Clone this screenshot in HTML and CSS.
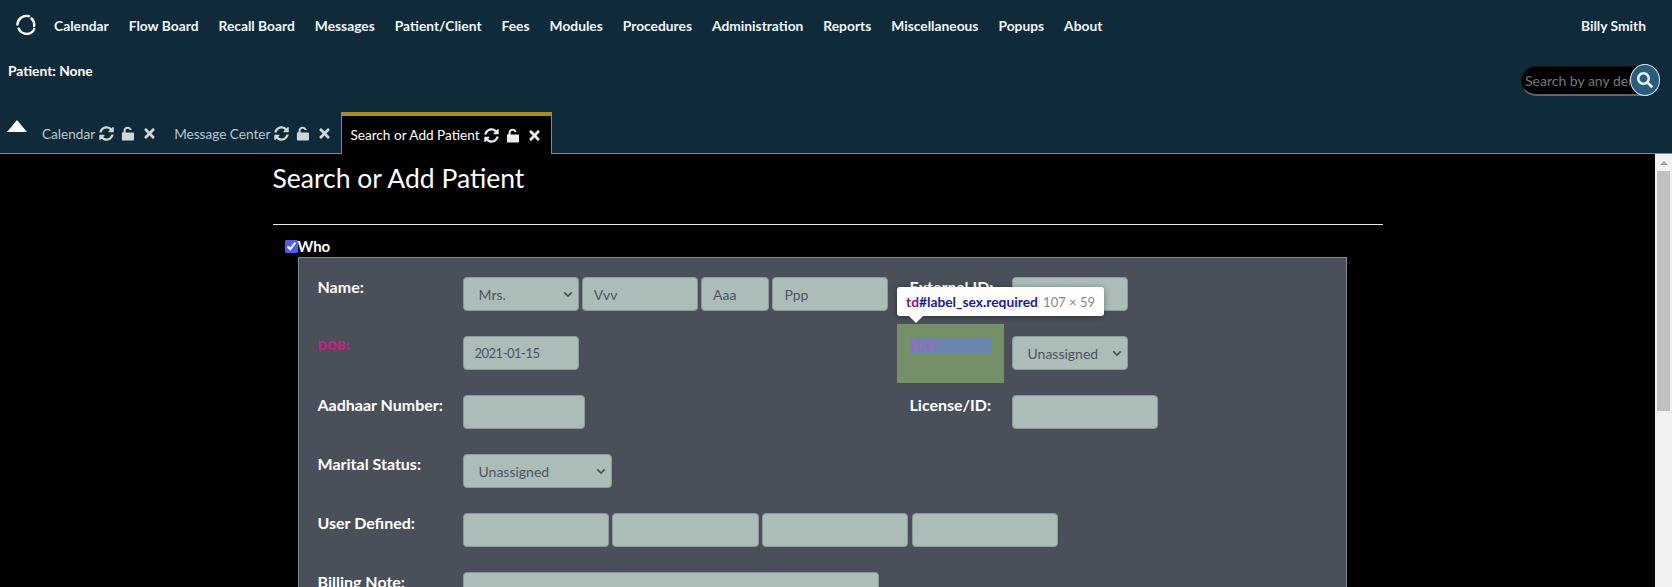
FILE: index.html
```html
<!DOCTYPE html>
<html lang="en">
<head>
    <title>Search or Add Patient</title>
    <meta charset="utf-8">
    <link rel="stylesheet" href="styles.css">
</head>
<body>
    <header id="topbar">
        <nav class="mainnav">
            <svg class="logo" viewBox="0 0 24 24" width="24" height="24">
                <path d="M15 3.2C9 1.6 3.5 6 3.4 11.6" />
                <path d="M17.5 5.5c2.6 2.4 3 5 2.6 7.6" />
                <path d="M4.6 15.5c1.6 3.8 5.6 5.8 9.6 5.2 3-.5 5-2.2 6-4.6" />
            </svg>
            <a>Calendar</a>
            <a>Flow Board</a>
            <a>Recall Board</a>
            <a>Messages</a>
            <a>Patient/Client</a>
            <a>Fees</a>
            <a>Modules</a>
            <a>Procedures</a>
            <a>Administration</a>
            <a>Reports</a>
            <a>Miscellaneous</a>
            <a>Popups</a>
            <a>About</a>
            <a class="username">Billy Smith</a>
        </nav>
        <div class="patientbar">
            <span class="patientname">Patient: None</span>
            <div class="searchbox">
                <input type="text" placeholder="Search by any demographics">
                <button type="button">
                    <svg viewBox="0 0 512 512" width="16" height="16"><path d="M505 442.7L405.3 343c-4.5-4.5-10.6-7-17-7H372c27.6-35.3 44-79.7 44-128C416 93.1 322.9 0 208 0S0 93.1 0 208s93.1 208 208 208c48.3 0 92.7-16.4 128-44v16.3c0 6.4 2.5 12.5 7 17l99.7 99.7c9.4 9.4 24.6 9.4 33.9 0l28.3-28.3c9.4-9.4 9.4-24.6.1-34zM208 336c-70.7 0-128-57.2-128-128 0-70.7 57.2-128 128-128 70.7 0 128 57.2 128 128 0 70.7-57.2 128-128 128z"/></svg>
                </button>
            </div>
        </div>
        <div class="tabbar">
            <span class="caret"></span>
            <div class="tab">
                <span>Calendar</span>
                <svg class="ic-sync" viewBox="0 0 512 512"><path d="M370.72 133.28C339.458 104.008 298.888 87.962 255.848 88c-77.458.068-144.328 53.178-162.791 126.85-1.344 5.363-6.122 9.15-11.651 9.15H24.103c-7.498 0-13.194-6.807-11.807-14.176C33.933 94.924 134.813 8 256 8c66.448 0 126.791 26.136 171.315 68.685L463.03 40.97C478.149 25.851 504 36.559 504 57.941V192c0 13.255-10.745 24-24 24H345.941c-21.382 0-32.09-25.851-16.971-40.971l41.75-41.749zM32 296h134.059c21.382 0 32.09 25.851 16.971 40.971l-41.75 41.75c31.262 29.273 71.835 45.319 114.876 45.28 77.418-.07 144.315-53.144 162.787-126.849 1.344-5.363 6.122-9.15 11.651-9.15h57.304c7.498 0 13.194 6.807 11.807 14.176C478.067 417.076 377.187 504 256 504c-66.448 0-126.791-26.136-171.315-68.685L48.97 471.03C33.851 486.149 8 475.441 8 454.059V320c0-13.255 10.745-24 24-24z"/></svg>
                <svg class="ic-lock" viewBox="0 0 14 16"><path d="M1.500 7V6h.9V4.600C2.400 2.300 4.200.8 6.600.8c2.300 0 4 1.400 4.200 3.500H8.700C8.500 3.400 7.700 2.800 6.600 2.800 5.400 2.800 4.500 3.500 4.500 4.700V7h7.900c.6 0 1 .4 1 1v6.400c0 .6-.4 1-1 1H1.500c-.6 0-1-.4-1-1V8c0-.6.4-1 1-1z"/></svg>
                <svg class="ic-close" viewBox="0 0 352 512"><path d="M242.72 256l100.07-100.07c12.28-12.28 12.28-32.19 0-44.48l-22.24-22.24c-12.28-12.28-32.19-12.28-44.48 0L176 189.28 75.93 89.21c-12.28-12.28-32.19-12.28-44.48 0L9.21 111.45c-12.28 12.28-12.28 32.19 0 44.48L109.28 256 9.21 356.07c-12.28 12.28-12.28 32.19 0 44.48l22.24 22.24c12.28 12.28 32.2 12.28 44.48 0L176 322.72l100.07 100.07c12.28 12.28 32.2 12.28 44.48 0l22.24-22.24c12.28-12.28 12.28-32.19 0-44.48L242.72 256z"/></svg>
            </div>
            <div class="tab">
                <span>Message Center</span>
                <svg class="ic-sync" viewBox="0 0 512 512"><path d="M370.72 133.28C339.458 104.008 298.888 87.962 255.848 88c-77.458.068-144.328 53.178-162.791 126.85-1.344 5.363-6.122 9.15-11.651 9.15H24.103c-7.498 0-13.194-6.807-11.807-14.176C33.933 94.924 134.813 8 256 8c66.448 0 126.791 26.136 171.315 68.685L463.03 40.97C478.149 25.851 504 36.559 504 57.941V192c0 13.255-10.745 24-24 24H345.941c-21.382 0-32.09-25.851-16.971-40.971l41.75-41.749zM32 296h134.059c21.382 0 32.09 25.851 16.971 40.971l-41.75 41.75c31.262 29.273 71.835 45.319 114.876 45.28 77.418-.07 144.315-53.144 162.787-126.849 1.344-5.363 6.122-9.15 11.651-9.15h57.304c7.498 0 13.194 6.807 11.807 14.176C478.067 417.076 377.187 504 256 504c-66.448 0-126.791-26.136-171.315-68.685L48.97 471.03C33.851 486.149 8 475.441 8 454.059V320c0-13.255 10.745-24 24-24z"/></svg>
                <svg class="ic-lock" viewBox="0 0 14 16"><path d="M1.500 7V6h.9V4.600C2.400 2.300 4.200.8 6.600.8c2.300 0 4 1.400 4.200 3.500H8.700C8.500 3.400 7.700 2.800 6.600 2.800 5.400 2.800 4.500 3.500 4.500 4.700V7h7.900c.6 0 1 .4 1 1v6.400c0 .6-.4 1-1 1H1.500c-.6 0-1-.4-1-1V8c0-.6.4-1 1-1z"/></svg>
                <svg class="ic-close" viewBox="0 0 352 512"><path d="M242.72 256l100.07-100.07c12.28-12.28 12.28-32.19 0-44.48l-22.24-22.24c-12.28-12.28-32.19-12.28-44.48 0L176 189.28 75.93 89.21c-12.28-12.28-32.19-12.28-44.48 0L9.21 111.45c-12.28 12.28-12.28 32.19 0 44.48L109.28 256 9.21 356.07c-12.28 12.28-12.28 32.19 0 44.48l22.24 22.24c12.28 12.28 32.2 12.28 44.48 0L176 322.72l100.07 100.07c12.28 12.28 32.2 12.28 44.48 0l22.24-22.24c12.28-12.28 12.28-32.19 0-44.48L242.72 256z"/></svg>
            </div>
            <div class="tab active">
                <span>Search or Add Patient</span>
                <svg class="ic-sync" viewBox="0 0 512 512"><path d="M370.72 133.28C339.458 104.008 298.888 87.962 255.848 88c-77.458.068-144.328 53.178-162.791 126.85-1.344 5.363-6.122 9.15-11.651 9.15H24.103c-7.498 0-13.194-6.807-11.807-14.176C33.933 94.924 134.813 8 256 8c66.448 0 126.791 26.136 171.315 68.685L463.03 40.97C478.149 25.851 504 36.559 504 57.941V192c0 13.255-10.745 24-24 24H345.941c-21.382 0-32.09-25.851-16.971-40.971l41.75-41.749zM32 296h134.059c21.382 0 32.09 25.851 16.971 40.971l-41.75 41.75c31.262 29.273 71.835 45.319 114.876 45.28 77.418-.07 144.315-53.144 162.787-126.849 1.344-5.363 6.122-9.15 11.651-9.15h57.304c7.498 0 13.194 6.807 11.807 14.176C478.067 417.076 377.187 504 256 504c-66.448 0-126.791-26.136-171.315-68.685L48.97 471.03C33.851 486.149 8 475.441 8 454.059V320c0-13.255 10.745-24 24-24z"/></svg>
                <svg class="ic-lock" viewBox="0 0 14 16"><path d="M1.500 7V6h.9V4.600C2.400 2.300 4.200.8 6.600.8c2.300 0 4 1.400 4.200 3.500H8.700C8.500 3.400 7.700 2.800 6.600 2.800 5.400 2.800 4.500 3.500 4.500 4.700V7h7.900c.6 0 1 .4 1 1v6.400c0 .6-.4 1-1 1H1.500c-.6 0-1-.4-1-1V8c0-.6.4-1 1-1z"/></svg>
                <svg class="ic-close" viewBox="0 0 352 512"><path d="M242.72 256l100.07-100.07c12.28-12.28 12.28-32.19 0-44.48l-22.24-22.24c-12.28-12.28-32.19-12.28-44.48 0L176 189.28 75.93 89.21c-12.28-12.28-32.19-12.28-44.48 0L9.21 111.45c-12.28 12.28-12.28 32.19 0 44.48L109.28 256 9.21 356.07c-12.28 12.28-12.28 32.19 0 44.48l22.24 22.24c12.28 12.28 32.2 12.28 44.48 0L176 322.72l100.07 100.07c12.28 12.28 32.2 12.28 44.48 0l22.24-22.24c12.28-12.28 12.28-32.19 0-44.48L242.72 256z"/></svg>
            </div>
        </div>
    </header>

    <section id="mainwrapper">
        <main class="content">
            <div class="container">
                <h2>Search or Add Patient</h2>
                <hr>
                <label class="who"><input type="checkbox" checked>Who</label>
                <div class="panel">
                    <table>
                        <colgroup>
                            <col class="col-label">
                            <col class="col-field">
                            <col class="col-sex">
                            <col>
                        </colgroup>
                        <tr>
                            <td class="lbl">Name:</td>
                            <td class="fld">
                                <select class="w116"><option>Mrs.</option></select>
                                <input class="w116" type="text" value="Vvv">
                                <input class="w68" type="text" value="Aaa">
                                <input class="w116" type="text" value="Ppp">
                            </td>
                            <td class="lbl">External ID:</td>
                            <td class="fld last"><input class="w116" type="text"></td>
                        </tr>
                        <tr>
                            <td class="lbl required">DOB:</td>
                            <td class="fld"><input class="w116 date" type="text" value="2021-01-15"></td>
                            <td class="lbl required" id="label_sex"><span>Sex:</span></td>
                            <td class="fld last"><select class="w116"><option>Unassigned</option></select></td>
                        </tr>
                        <tr>
                            <td class="lbl">Aadhaar Number:</td>
                            <td class="fld"><input class="w122" type="text"></td>
                            <td class="lbl">License/ID:</td>
                            <td class="fld last"><input class="w146" type="text"></td>
                        </tr>
                        <tr>
                            <td class="lbl">Marital Status:</td>
                            <td class="fld" colspan="3"><select class="w149"><option>Unassigned</option></select></td>
                        </tr>
                        <tr>
                            <td class="lbl">User Defined:</td>
                            <td class="fld" colspan="3">
                                <input class="w146" type="text">
                                <input class="w146" type="text">
                                <input class="w146" type="text">
                                <input class="w146" type="text">
                            </td>
                        </tr>
                        <tr>
                            <td class="lbl">Billing Note:</td>
                            <td class="fld" colspan="3"><input class="w416" type="text"></td>
                        </tr>
                    </table>
                </div>
            </div>
            <div class="inspect">
                <b class="tagname">td</b><b class="selector">#label_sex.required</b><span class="dims">107 × 59</span>
            </div>
        </main>
        <div class="scrollbar">
            <span class="arrow"></span>
            <span class="thumb"></span>
        </div>
    </section>
</body>
</html>
```

FILE: styles.css
```css
html, body {
    height: 100%;
}
body {
    margin: 0;
    display: flex;
    flex-direction: column;
    overflow: hidden;
    background: #000;
    color: #fff;
    font-family: "Lato", "Noto Sans", sans-serif;
    font-size: 14px;
}
#topbar {
    height: 154px;
    flex: none;
    display: flex;
    flex-direction: column;
    background: #0f2b39;
    border-bottom: 1px solid #a98e0d;
    box-sizing: border-box;
}
.mainnav {
    height: 50px;
    flex: none;
    display: flex;
    align-items: center;
    gap: 20px;
    padding: 0 26px 0 14px;
    font-weight: 700;
    font-size: 13.8px;
    color: #f1f6f8;
}
.logo {
    fill: none;
    stroke: #fff;
    stroke-width: 2.4;
    stroke-linecap: round;
    margin-right: -4px;
}
.username {
    margin-left: auto;
}
.patientbar {
    height: 62px;
    flex: none;
    display: flex;
    justify-content: space-between;
    align-items: flex-start;
    padding: 0 12px 0 8px;
}
.patientname {
    font-weight: 700;
    font-size: 13.8px;
    margin-top: 12px;
}
.searchbox {
    display: flex;
    margin-top: 16px;
}
.searchbox input[type="text"] {
    width: 138px;
    height: 30px;
    margin: 0;
    padding: 0 28px 0 3px;
    background: #000;
    border: 1px solid #111;
    border-bottom: 2px solid #666;
    border-radius: 15px;
    color: #888;
}
.searchbox input::placeholder {
    color: #777;
}
.searchbox button {
    width: 30px;
    height: 32px;
    margin-left: -29px;
    margin-top: -2px;
    padding: 0;
    display: flex;
    align-items: center;
    justify-content: center;
    background: #2a5d7a;
    border: 1px solid #dfe7ea;
    border-radius: 50%;
}
.searchbox svg {
    fill: #e6eef2;
}
.tabbar {
    flex: 1;
    display: flex;
    align-items: stretch;
}
.caret {
    width: 0;
    height: 0;
    margin: 8px 7px 0 7px;
    border: 10px solid transparent;
    border-top: 0;
    border-bottom: 12px solid #fff;
}
.tab {
    display: flex;
    align-items: center;
    gap: 6px;
    padding: 2px 11px 0 8px;
    color: #b4c6d0;
    font-size: 13.6px;
}
.tab svg {
    flex: none;
    height: 15px;
    fill: #cfd6da;
}
.ic-sync {
    width: 15px;
    margin-left: -2px;
}
.ic-lock {
    width: 14px;
    margin-left: 1px;
}
.ic-close {
    width: 11px;
    margin-left: 3px;
}
.tab.active {
    margin: 0 0 -1px 0;
    padding: 0 11px 0 8px;
    box-sizing: border-box;
    background: #000;
    color: #fff;
    border: 1px solid #a98e0d;
    border-top: 4px solid #a98e0d;
    border-bottom: 0;
}
.tab.active svg {
    fill: #e8ecee;
}

#mainwrapper {
    flex: 1;
    display: flex;
    min-height: 0;
}
.content {
    flex: 1;
    position: relative;
    overflow: hidden;
}
.container {
    width: 1110px;
    margin: 0 auto;
}
h2 {
    margin: 8px 0 0 0;
    font-size: 26.5px;
    font-weight: 400;
    line-height: 32px;
}
hr {
    margin: 30px 0 0 0;
    border: 0;
    border-top: 1px solid #e8e8e8;
}
.who {
    display: block;
    padding: 12px 0 0 12px;
    box-sizing: border-box;
    height: 32px;
    font-weight: 700;
    font-size: 15px;
    line-height: 18px;
}
.who input {
    margin: 0;
    width: 13px;
    height: 13px;
    accent-color: #4a60f2;
    vertical-align: -1px;
}
.panel {
    margin-left: 25px;
    padding: 7px 7px 7px 6px;
    width: 1049px;
    box-sizing: border-box;
    background: #4a5059;
    border: 1px solid #7c8a88;
    height: 400px;
}
table {
    border-collapse: collapse;
    table-layout: fixed;
    width: 1030px;
}
.col-label {
    width: 158px;
}
.col-field {
    width: 434px;
}
.col-sex {
    width: 107px;
}
td {
    height: 59px;
    padding: 0;
    vertical-align: top;
    box-sizing: border-box;
}
td.lbl {
    padding: 12px 0 0 13px;
    font-weight: 700;
    font-size: 16px;
    line-height: 20px;
    white-space: nowrap;
}
td.fld {
    padding: 12px 0 0 0;
    font-size: 0;
}
td.last {
    padding-left: 8px;
}
td.required {
    color: #c2237d;
    font-family: "DejaVu Sans", sans-serif;
    font-size: 11.5px;
}
#label_sex {
    background: #739067;
    padding: 13px;
    color: #9b6cb9;
}
#label_sex span {
    display: block;
    height: 17px;
    line-height: 17px;
    background: #6b85ae;
}
input[type="text"], select {
    height: 34px;
    box-sizing: border-box;
    margin: 0 3.3px 0 0;
    padding: 0 11px;
    background-color: #abbcb9;
    border: 1px solid #8d9a9a;
    border-radius: 4px;
    color: #4d5560;
    font: 14px "Lato", sans-serif;
    vertical-align: top;
}
input.date {
    font-size: 13px;
    letter-spacing: -0.5px;
}
select {
    appearance: none;
    padding-left: 15px;
    background-image: url("data:image/svg+xml,%3Csvg xmlns='http://www.w3.org/2000/svg' viewBox='0 0 12 8'%3E%3Cpath d='M1.500 1.500 6 6l4.500-4.500' fill='none' stroke='%234a5059' stroke-width='2'/%3E%3C/svg%3E");
    background-repeat: no-repeat;
    background-position: right 5px center;
    background-size: 10px 7px;
}
.w68 { width: 68px; }
.w116 { width: 116px; }
.w122 { width: 122px; }
.w146 { width: 146.4px; }
.w149 { width: 149px; }
.w416 { width: 416px; }

.inspect {
    position: absolute;
    left: 897px;
    top: 133px;
    width: 207px;
    height: 29px;
    box-sizing: border-box;
    display: flex;
    align-items: center;
    padding: 0 9px;
    background: #fff;
    border-radius: 3px;
    box-shadow: 0 1px 6px rgba(0, 0, 0, 0.35);
    font-size: 13.8px;
    white-space: nowrap;
}
.inspect::after {
    content: "";
    position: absolute;
    left: 12px;
    top: 29px;
    border: 7px solid transparent;
    border-top-color: #fff;
    border-bottom: 0;
}
.tagname {
    color: #881280;
}
.selector {
    color: #1a1aa6;
}
.dims {
    margin-left: auto;
    color: #888;
    font-size: 13px;
}

.scrollbar {
    width: 17px;
    flex: none;
    display: flex;
    flex-direction: column;
    align-items: center;
    background: #f1f1f1;
}
.arrow {
    margin-top: 7px;
    width: 0;
    height: 0;
    border: 4px solid transparent;
    border-top: 0;
    border-bottom: 4px solid #a3a3a3;
}
.thumb {
    margin-top: 6px;
    width: 13px;
    height: 240px;
    background: #c1c1c1;
}
```
